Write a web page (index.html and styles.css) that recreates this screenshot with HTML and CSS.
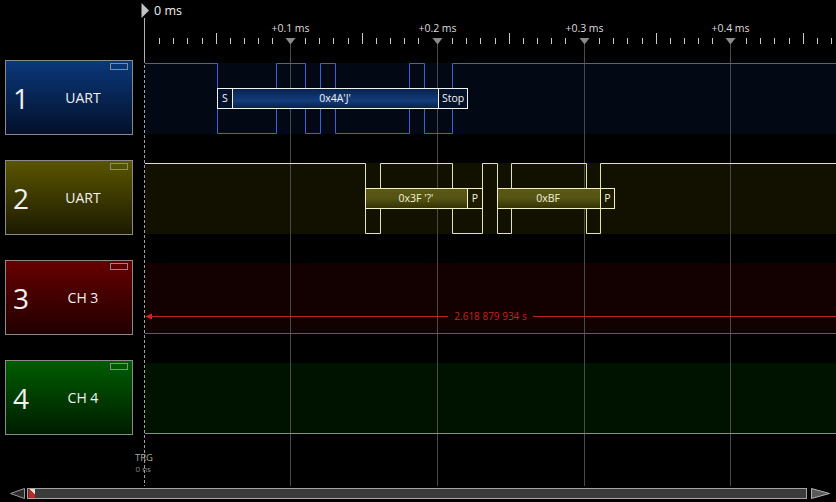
FILE: index.html
```html
<!DOCTYPE html>
<html>
<head>
<meta charset="utf-8">
<link rel="stylesheet" href="styles.css">
</head>
<body>
<div class="app">
  <div class="main">
    <div class="labels">
      <div class="ch ch1"><span class="num">1</span><span class="name">UART</span></div>
      <div class="ch ch2"><span class="num">2</span><span class="name">UART</span></div>
      <div class="ch ch3"><span class="num">3</span><span class="name">CH 3</span></div>
      <div class="ch ch4"><span class="num">4</span><span class="name">CH 4</span></div>
    </div>
    <svg class="plot" width="701" height="486" viewBox="135 0 701 486">
      <defs>
        <linearGradient id="gb" x1="0" y1="0" x2="0" y2="1">
          <stop offset="0" stop-color="#08224a"/>
          <stop offset="0.6" stop-color="#123c7c"/>
          <stop offset="1" stop-color="#081f46"/>
        </linearGradient>
        <linearGradient id="gy" x1="0" y1="0" x2="0" y2="1">
          <stop offset="0" stop-color="#5a5814"/>
          <stop offset="0.5" stop-color="#555312"/>
          <stop offset="1" stop-color="#323004"/>
        </linearGradient>
      </defs>

      <!-- channel backgrounds -->
      <rect class="bg1" x="145" y="63" width="691" height="71"/>
      <rect class="bg2" x="145" y="163" width="691" height="71"/>
      <rect class="bg3" x="145" y="263" width="691" height="71"/>
      <rect class="bg4" x="145" y="363" width="691" height="71"/>

      <!-- grid -->
      <path class="grid" d="M290.5 44V488M437.5 44V488M584.5 44V488M730.5 44V488"/>

      <!-- ruler ticks -->
      <path class="tick" d="M159.5 38v6M173.5 38v6M187.5 38v6M202.5 38v6M216.5 33v11M230.5 38v6M244.5 38v6M258.5 38v6M272.5 38v6
        M305.5 38v6M319.5 38v6M333.5 38v6M348.5 38v6M362.5 33v11M376.5 38v6M390.5 38v6M404.5 38v6M418.5 38v6
        M452.5 38v6M466.5 38v6M480.5 38v6M495.5 38v6M509.5 33v11M523.5 38v6M537.5 38v6M551.5 38v6M565.5 38v6
        M599.5 38v6M613.5 38v6M627.5 38v6M642.5 38v6M656.5 33v11M670.5 38v6M684.5 38v6M698.5 38v6M712.5 38v6
        M746.5 38v6M760.5 38v6M774.5 38v6M789.5 38v6M803.5 33v11M817.5 38v6M831.5 38v6"/>
      <polygon class="mk" points="285.5,38 295.5,38 290.5,44.5"/>
      <polygon class="mk" points="432.5,38 442.5,38 437.5,44.5"/>
      <polygon class="mk" points="579.5,38 589.5,38 584.5,44.5"/>
      <polygon class="mk" points="725.5,38 735.5,38 730.5,44.5"/>
      <text class="rl" x="290.5" y="32">+0.1 ms</text>
      <text class="rl" x="437.5" y="32">+0.2 ms</text>
      <text class="rl" x="584.5" y="32">+0.3 ms</text>
      <text class="rl" x="730.5" y="32">+0.4 ms</text>

      <!-- trigger -->
      <path class="trg-solid" d="M144.5 18V60"/>
      <path class="trg-dash" d="M144.5 60V488"/>
      <polygon class="flag" points="141.5,3 149,10.5 141.5,18"/>
      <text class="zero" x="154" y="15">0 ms</text>

      <!-- channel 1 -->
      <path class="w1" d="M145 63.5H217.5V133.5H276.5V63.5H305.5V133.5H320.5V63.5H335.5V133.5H409.5V63.5H424.5V133.5H452.5V63.5H836"/>
      <rect class="c1d" x="217.5" y="88.5" width="15" height="20"/>
      <rect class="c1m" x="232.5" y="88.5" width="206" height="20"/>
      <rect class="c1d" x="438.5" y="88.5" width="29" height="20"/>
      <text class="d1" x="225" y="102">S</text>
      <text class="d1" x="335" y="102">0x4A'J'</text>
      <text class="d1" x="453" y="102">Stop</text>

      <!-- channel 2 -->
      <path class="w2" d="M145 163.5H365.5V233.5H380.5V163.5H452.5V233.5H482.5V163.5H497.5V233.5H511.5V163.5H586.5V233.5H600.5V163.5H836"/>
      <rect class="c2m" x="365.5" y="188.5" width="102" height="20"/>
      <rect class="c2d" x="467.5" y="188.5" width="15" height="20"/>
      <rect class="c2m" x="497.5" y="188.5" width="103" height="20"/>
      <rect class="c2d" x="600.5" y="188.5" width="14" height="20"/>
      <text class="d2" x="416" y="202">0x3F '?'</text>
      <text class="d2" x="475" y="202">P</text>
      <text class="d2" x="548" y="202">0xBF</text>
      <text class="d2" x="607.5" y="202">P</text>

      <!-- channel 3 -->
      <path class="w3" d="M145 333.5H836"/>
      <path class="meas" d="M151 316.5H448M533 316.5H836"/>
      <polygon class="arr" points="145,316.5 152,313.5 152,319.5"/>
      <text class="mt" x="490.5" y="320">2.618 879 934 s</text>

      <!-- channel 4 -->
      <path class="w4" d="M145 433.5H836"/>

      <!-- trigger label -->
      <text class="trgl" x="135" y="461">TRG</text>
      <text class="trgs" x="135.5" y="472">0 ns</text>
    </svg>
  </div>
  <div class="scroll">
    <svg class="arrow-l" width="15" height="11" viewBox="0 0 15 11">
      <polygon points="14.5,0.5 14.5,10.5 0.5,5.5" fill="#2a2a2a" stroke="#9a9a9a"/>
    </svg>
    <div class="track"><span class="thumb"></span></div>
    <svg class="arrow-r" width="19" height="11" viewBox="0 0 19 11">
      <polygon points="0.5,0.5 0.5,10.5 18.5,5.5" fill="#5a5a5a" stroke="#b0b0b0"/>
    </svg>
  </div>
</div>
</body>
</html>
```
FILE: styles.css
```css
* { box-sizing: border-box; }
html, body { margin: 0; padding: 0; background: #000; }
body {
  width: 836px;
  height: 502px;
  overflow: hidden;
  font-family: "Open Sans", "DejaVu Sans", sans-serif;
}
.app {
  display: flex;
  flex-direction: column;
  width: 836px;
  height: 502px;
}
.main {
  display: flex;
  height: 486px;
}
.labels {
  width: 135px;
  flex: none;
  padding: 60px 0 0 5px;
  display: flex;
  flex-direction: column;
  gap: 25px;
}
.ch {
  position: relative;
  width: 128px;
  height: 75px;
  border: 1px solid #8a8a8a;
  display: flex;
  align-items: center;
  color: #f2f2f2;
}
.ch::after {
  content: "";
  position: absolute;
  top: 2px;
  right: 4px;
  width: 16px;
  height: 5px;
  border: 1px solid #8a8a8a;
}
.num {
  width: 28px;
  padding-left: 7px;
  font-size: 28px;
  line-height: 1;
}
.name {
  flex: 1;
  text-align: center;
  font-size: 14px;
  line-height: 1;
}
.ch1 { background: linear-gradient(#0a387a, #03102a); }
.ch2 { background: linear-gradient(#5a5500, #1c1a00); }
.ch3 { background: linear-gradient(#660000, #200000); }
.ch4 { background: linear-gradient(#005c00, #001c00); }

.plot { display: block; flex: none; }
.bg1 { fill: #020915; }
.bg2 { fill: #121100; }
.bg3 { fill: #130000; }
.bg4 { fill: #001300; }
.grid { stroke: #4a4a4a; stroke-width: 1; fill: none; }
.tick { stroke: #c8c8c8; stroke-width: 1; fill: none; }
.mk { fill: #8a8a8a; }
.rl { font: 10.5px "Open Sans", sans-serif; fill: #dcdcdc; text-anchor: middle; }
.zero { font: 12.5px "Open Sans", sans-serif; fill: #f0f0f0; }
.trg-solid { stroke: #b0b0b0; stroke-width: 1; }
.trg-dash { stroke: #a0a0a0; stroke-width: 1; stroke-dasharray: 3 2; }
.flag { fill: #c4c4c4; }
.w1 { stroke: #3a62d6; stroke-width: 1; fill: none; }
.w2 { stroke: #e4e4a2; stroke-width: 1; fill: none; }
.w3 { stroke: #d42a2a; stroke-width: 1; fill: none; }
.w4 { stroke: #3cc23c; stroke-width: 1; fill: none; }
.c1m { fill: url(#gb); stroke: #f4f4f4; stroke-width: 1; }
.c1d { fill: #03112a; stroke: #f4f4f4; stroke-width: 1; }
.c2m { fill: url(#gy); stroke: #f2f2c4; stroke-width: 1; }
.c2d { fill: #1c1b00; stroke: #f2f2c4; stroke-width: 1; }
.d1 { font: 10.5px "Open Sans", sans-serif; fill: #f4f4f4; text-anchor: middle; }
.d2 { font: 10.5px "Open Sans", sans-serif; fill: #f2f2d8; text-anchor: middle; }
.meas { stroke: #c02222; stroke-width: 1; fill: none; }
.arr { fill: #d02424; }
.mt { font: 10px "Open Sans", sans-serif; fill: #c42424; text-anchor: middle; }
.trgl { font: 9.5px "Open Sans", sans-serif; fill: #a8a8a8; }
.trgs { font: 8px "Open Sans", sans-serif; fill: #8a8a8a; }

.scroll {
  display: flex;
  align-items: flex-start;
  height: 16px;
  padding: 2px 0 0 10px;
}
.arrow-l, .arrow-r { display: block; flex: none; }
.track {
  width: 780px;
  height: 11px;
  margin: 0 4px 0 2px;
  border: 1px solid #a4a4a4;
  background: #3b3b3b;
  display: flex;
  align-items: center;
  flex: none;
}
.thumb {
  display: block;
  width: 6px;
  height: 9px;
  margin-left: 1px;
  background: linear-gradient(225deg, #e0e0e0 0 35%, #c02828 35% 100%);
}
```
